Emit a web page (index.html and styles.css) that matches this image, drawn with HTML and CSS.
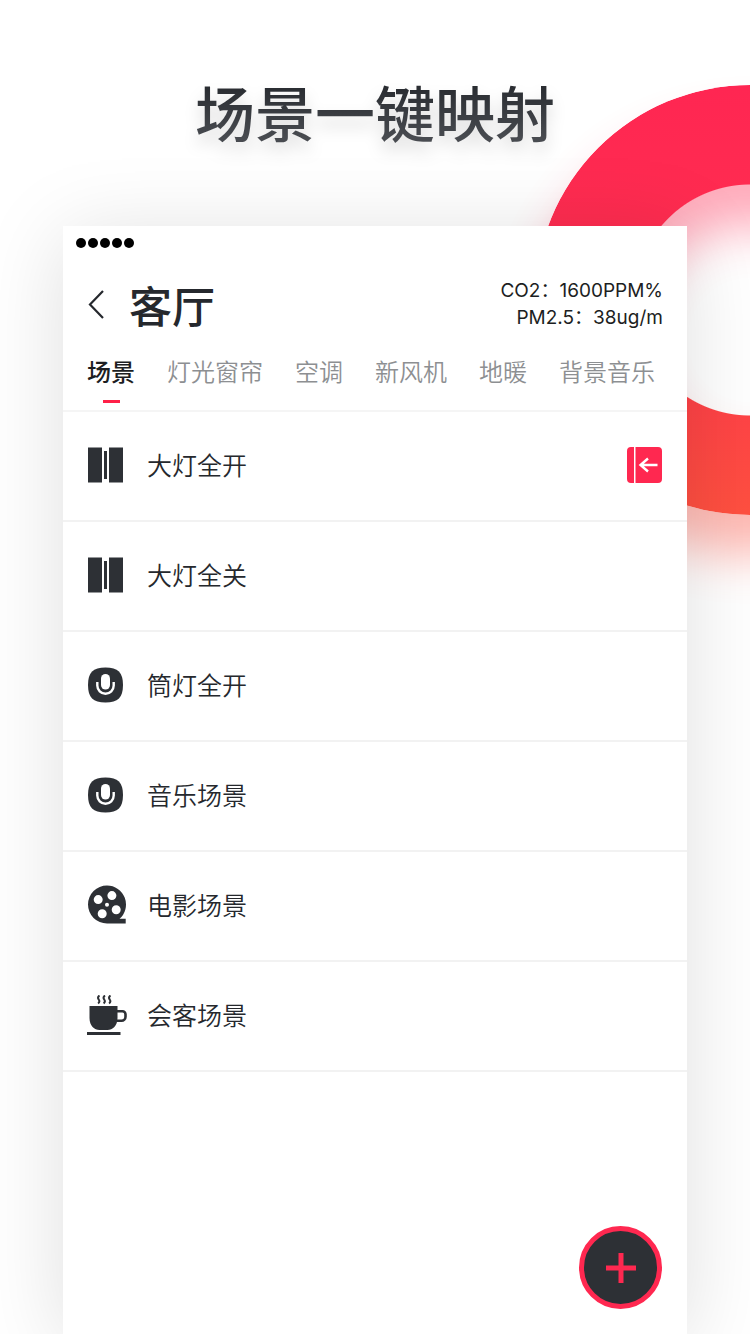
FILE: index.html
```html
<!DOCTYPE html>
<html lang="zh-CN">
<head>
<meta charset="utf-8">
<meta name="viewport" content="width=device-width, initial-scale=1">
<title>场景一键映射</title>
<link rel="stylesheet" href="styles.css">
</head>
<body>
<svg class="sprite" aria-hidden="true">
  <symbol id="curtain" viewBox="0 0 40 40">
    <path d="M1 2.500h14v35H1zM17 6h3v28h-3zM22 2.500h14v35H22z"/>
  </symbol>
  <symbol id="mic" viewBox="0 0 40 40">
    <path d="M18.500 2.500C31 2.500 36 7.500 36 20S31 37.500 18.500 37.500 1 32.500 1 20 6 2.500 18.500 2.500z"/>
    <rect x="14" y="9" width="9" height="15.500" rx="4.500" fill="#fff"/>
    <path d="M10.300 17v3.500a8.200 8.200 0 0 0 16.400 0V17" fill="none" stroke="#fff" stroke-width="2.400"/>
  </symbol>
  <symbol id="film" viewBox="0 0 40 40">
    <path fill-rule="evenodd" d="M20 0.500a19 19 0 0 1 12.500 33.300h6.200v4.700H20A19 19 0 0 1 20 0.500zM20 17.700a2 2 0 1 0 0 4 2 2 0 0 0 0-4zM24.900 6.100a4.500 4.500 0 1 0 0 9 4.500 4.500 0 0 0 0-9zM11.200 10.100a4.500 4.500 0 1 0 0 9 4.500 4.500 0 0 0 0-9zM29.200 20.300a4.500 4.500 0 1 0 0 9 4.500 4.500 0 0 0 0-9zM15.200 24.300a4.500 4.500 0 1 0 0 9 4.500 4.500 0 0 0 0-9z"/>
  </symbol>
  <symbol id="cup" viewBox="0 0 40 40">
    <path d="M2.500 11h28V23c0 8-5 12-10 12h-8c-5 0-10-4-10-12zM0 37h33.500v3H0z"/>
    <path d="M30 16.300h5.500a3 3 0 0 1 3 3v2.400a4 4 0 0 1-4 4H30" fill="none" stroke="currentColor" stroke-width="2.600"/>
    <path d="M12.500.5q-2.400 1.800-.8 4t-.6 4M18 .5q-2.400 1.800-.8 4t-.6 4M23.500.5q-2.400 1.800-.8 4t-.6 4" fill="none" stroke="currentColor" stroke-width="2"/>
  </symbol>
</svg>
<div class="page">
  <div class="ring"></div>
  <h1 class="headline">场景一键映射</h1>
  <main class="card">
    <header class="top">
      <div class="dots" aria-hidden="true"><i></i><i></i><i></i><i></i><i></i></div>
      <div class="bar">
        <button class="back" type="button" aria-label="返回">
          <svg viewBox="0 0 18 30"><path d="M16 2 3 15.500 16 29" fill="none" stroke="currentColor" stroke-width="2.200"/></svg>
        </button>
        <h2 class="room">客厅</h2>
        <div class="air">
          <p>CO2：1600PPM%</p>
          <p>PM2.5：38ug/m</p>
        </div>
      </div>
      <nav class="tabs">
        <button class="tab tab-active" type="button">场景</button>
        <button class="tab" type="button">灯光窗帘</button>
        <button class="tab" type="button">空调</button>
        <button class="tab" type="button">新风机</button>
        <button class="tab" type="button">地暖</button>
        <button class="tab" type="button">背景音乐</button>
        <button class="tab" type="button">智能</button>
      </nav>
    </header>
    <ul class="scenes">
      <li class="scene"><svg class="icon"><use href="#curtain"/></svg><span>大灯全开</span>
        <button class="map" type="button" aria-label="映射">
          <svg viewBox="0 0 36 36"><path d="M7 0H4a4 4 0 0 0-4 4v28a4 4 0 0 0 4 4h3zM8.500 0H31a4 4 0 0 1 4 4v28a4 4 0 0 1-4 4H8.500z" fill="#ff2850"/><path d="M30.500 18H13.500M21 11.500l-7.500 6.500 7.500 6.500" fill="none" stroke="#fff" stroke-width="2.400"/></svg>
        </button>
      </li>
      <li class="scene"><svg class="icon"><use href="#curtain"/></svg><span>大灯全关</span></li>
      <li class="scene"><svg class="icon"><use href="#mic"/></svg><span>筒灯全开</span></li>
      <li class="scene"><svg class="icon"><use href="#mic"/></svg><span>音乐场景</span></li>
      <li class="scene"><svg class="icon"><use href="#film"/></svg><span>电影场景</span></li>
      <li class="scene"><svg class="icon"><use href="#cup"/></svg><span>会客场景</span></li>
    </ul>
    <button class="add" type="button" aria-label="添加">
      <svg viewBox="0 0 30 30"><path d="M15 0v30M0 15h30" fill="none" stroke="currentColor" stroke-width="5"/></svg>
    </button>
  </main>
</div>
</body>
</html>
```
FILE: styles.css
```css
*, *::before { box-sizing: border-box; }
body, h1, h2, p, ul { margin: 0; padding: 0; }
body {
  font-family: "Noto Sans CJK SC", sans-serif;
  color: #25282d;
  background: #fff;
}
button {
  padding: 0;
  border: 0;
  background: none;
  color: inherit;
  font: inherit;
  cursor: pointer;
}
svg { display: block; }
.sprite { position: absolute; width: 0; height: 0; }

.page {
  position: relative;
  display: flex;
  flex-direction: column;
  min-height: 100vh;
  padding: 66px 63px 0;
  overflow: hidden;
}
.ring {
  position: absolute;
  top: 85px;
  right: -215px;
  width: 430px;
  height: 430px;
  border-radius: 50%;
  background: linear-gradient(#ff2652, #ff2d50 35%, #ff5040);
  -webkit-mask: radial-gradient(circle, transparent 115px, #000 116px);
  mask: radial-gradient(circle, transparent 115px, #000 116px);
}
.page::before {
  content: "";
  position: absolute;
  top: 125px;
  right: -215px;
  width: 430px;
  height: 430px;
  border: 100px solid #ff2d55;
  border-bottom-color: #ff5040;
  border-radius: 50%;
  opacity: 0.4;
  filter: blur(24px);
}
.headline {
  position: relative;
  align-self: center;
  font-size: 60px;
  line-height: 90px;
  font-weight: 500;
  white-space: nowrap;
  color: transparent;
  background: linear-gradient(#282b30 20%, #484b50 80%);
  -webkit-background-clip: text;
  background-clip: text;
  filter: drop-shadow(0 10px 8px rgba(0, 0, 0, 0.14));
}
.card {
  position: relative;
  display: flex;
  flex: 1;
  flex-direction: column;
  margin-top: 70px;
  background: #fff;
  box-shadow: 0 10px 80px rgba(0, 0, 0, 0.13);
}
.top {
  overflow: hidden;
  border-bottom: 2px solid #f5f5f5;
}
.dots { display: flex; gap: 2px; padding: 12px 13px 0; }
.dots i { width: 10px; height: 10px; border-radius: 50%; background: #000; }
.bar {
  display: flex;
  align-items: center;
  padding: 26px 24px 0;
}
.back { width: 18px; }
.back svg { width: 18px; height: 30px; }
.room {
  flex: 1;
  margin-left: 24px;
  font-size: 43px;
  line-height: 60px;
  font-weight: 500;
}
.air {
  font-family: Inter, "Noto Sans CJK SC", sans-serif;
  font-size: 19px;
  line-height: 27px;
  text-align: right;
  color: #1c1e22;
}
.tabs {
  display: flex;
  gap: 32px;
  margin-top: 15px;
  padding-left: 24px;
}
.tab {
  flex: none;
  height: 61px;
  padding-bottom: 17px;
  font-size: 24px;
  line-height: 36px;
  font-weight: 350;
  color: #8d8f92;
}
.tab-active {
  font-weight: 500;
  color: #1c1e22;
  background: linear-gradient(#ff2048, #ff2048) center 51px / 17px 3px no-repeat;
}
.scenes { list-style: none; }
.scene {
  display: flex;
  align-items: center;
  gap: 20px;
  height: 110px;
  padding: 0 24px 2px;
  border-bottom: 2px solid #f2f2f2;
  font-size: 25px;
  line-height: 38px;
  font-weight: 350;
}
.scene span { padding-bottom: 2px; }
.icon { width: 40px; height: 40px; fill: #2d3035; color: #2d3035; }
.map { margin-left: auto; }
.map svg { width: 36px; height: 36px; }
.add {
  display: grid;
  place-items: center;
  align-self: flex-end;
  width: 83px;
  height: 83px;
  margin: auto 25px 25px 0;
  border: 5px solid #ff2850;
  border-radius: 50%;
  background: #2d3035;
  color: #ff2850;
}
.add svg { width: 30px; height: 30px; }
```
